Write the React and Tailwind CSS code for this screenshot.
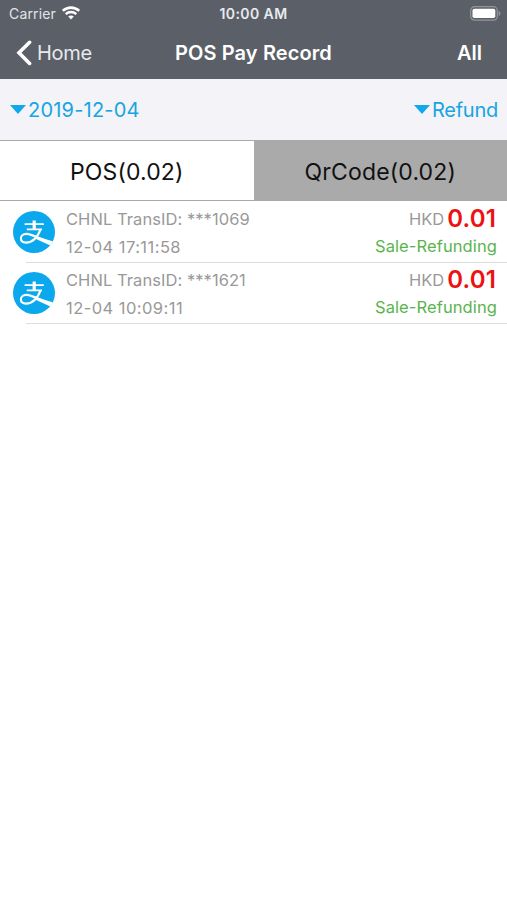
import React, { useState } from 'react';

const records = [
  { id: '***1069', time: '12-04 17:11:58', currency: 'HKD', amount: '0.01', status: 'Sale-Refunding' },
  { id: '***1621', time: '12-04 10:09:11', currency: 'HKD', amount: '0.01', status: 'Sale-Refunding' },
];

const tabs = [
  { key: 'pos', label: 'POS(0.02)' },
  { key: 'qr', label: 'QrCode(0.02)' },
];

const WifiIcon = () => (
  <svg viewBox="0 0 18 14" className="w-[18px] h-[14px] mb-px" fill="none" stroke="#fff">
    <path d="M0.8 4.9C5.4 0.5 12.6 0.5 17.2 4.9" strokeWidth="2.6" />
    <path d="M3.7 8.1C6.7 5.3 11.3 5.3 14.3 8.1" strokeWidth="2.3" />
    <path d="M9 13.4L6.2 10.6C7.8 9.2 10.2 9.2 11.8 10.6Z" fill="#fff" stroke="none" />
  </svg>
);

const BatteryIcon = () => (
  <svg viewBox="0 0 31 15" className="w-[31px] h-[15px]">
    <rect x="0.7" y="0.7" width="26.6" height="13.4" rx="3.8" fill="none" stroke="#92969c" strokeWidth="1.2" />
    <rect x="2.5" y="2.7" width="22.8" height="9.4" rx="1.8" fill="#fff" />
    <path d="M28.6 5v5c1.1-.4 1.9-1.4 1.9-2.5S29.7 5.4 28.6 5z" fill="#92969c" />
  </svg>
);

const Caret = () => (
  <svg viewBox="0 0 16 9" className="w-4 h-[9px] mb-0.5" fill="#10aaea">
    <path d="M0 0H16L8 9Z" />
  </svg>
);

const AlipayIcon = () => (
  <svg viewBox="0 0 42 42" className="w-[42px] h-[42px] shrink-0">
    <defs>
      <clipPath id="badge">
        <circle cx="21" cy="21" r="21" />
      </clipPath>
    </defs>
    <g clipPath="url(#badge)">
      <rect width="42" height="42" fill="#0ba8ee" />
      <g fill="none" stroke="#fff">
        <path d="M11.6 13.2H30.8M13.8 18.4H29" strokeWidth="1.8" />
        <path d="M21.2 9.6V18.4" strokeWidth="3.2" />
        <path
          d="M27.6 18.4C25.4 24 20.5 31.6 13 31.6C9.6 31.6 7.9 29.8 7.9 27.3C7.9 24.9 10 22.9 13.3 22.9C19 22.9 25 27 42 34"
          strokeWidth="2.1"
        />
      </g>
      <path d="M24 25.4L42 31V36.5C36 34 29 31 22.5 27.8Z" fill="#fff" />
    </g>
  </svg>
);

const RecordRow = ({ record }) => (
  <li className="h-[61px] flex pl-[13px]">
    <div className="relative flex items-center pb-0.5">
      <AlipayIcon />
      <span className="absolute bottom-0 left-[13px] right-0 h-px bg-[#dedee0]" />
    </div>
    <div className="flex-1 flex justify-between pl-[11px] pr-[10px] border-b border-[#dedee0] text-[#999]">
      <div className="text-[16.5px] leading-7 pt-[3px]">
        <p className="tracking-[0.06px]">CHNL TransID: {record.id}</p>
        <p className="tracking-[0.45px]">{record.time}</p>
      </div>
      <div className="text-right pt-[3px]">
        <p className="h-[27px] flex items-center justify-end gap-[3px] pr-px">
          <span className="pt-0.5 text-[16.5px]">{record.currency}</span>
          <span className="text-[24px] tracking-[0.15px] font-semibold text-[#ee1111]">{record.amount}</span>
        </p>
        <p className="text-[16.5px] leading-7 tracking-[0.1px] text-[#5ab44e]">{record.status}</p>
      </div>
    </div>
  </li>
);

const App = () => {
  const [activeTab, setActiveTab] = useState('pos');

  return (
    <div className="w-full min-h-screen bg-white font-['Inter',sans-serif]">
      <header className="h-[79px] bg-[#5b6068] text-white">
        <div className="h-[27px] grid grid-cols-[1fr_auto_1fr] items-center px-[6px]">
          <div className="flex items-center gap-1.5 pl-[3px] text-[14px] tracking-[0.15px] text-[#e2e4e8]">
            <span>Carrier</span>
            <WifiIcon />
          </div>
          <span className="text-center text-[14px] tracking-[0.4px] font-semibold text-[#e8eaee]">10:00 AM</span>
          <div className="flex justify-end">
            <BatteryIcon />
          </div>
        </div>
        <div className="h-[52px] grid grid-cols-[1fr_auto_1fr] items-center px-4">
          <button className="flex items-center gap-[5px] text-[20px] tracking-[-0.3px] text-[#e7e9ed]">
            <svg
              viewBox="0 0 16 26"
              className="w-4 h-[26px]"
              fill="none"
              stroke="#fff"
              strokeWidth="3.6"
              strokeLinecap="round"
            >
              <path d="M13.6 2.3L3 12.8L13.6 23.4" />
            </svg>
            Home
          </button>
          <h1 className="text-[20px] tracking-[0.1px] font-semibold">POS Pay Record</h1>
          <button className="pr-[9px] text-right text-[20px] font-semibold">All</button>
        </div>
      </header>

      <div className="h-[61px] flex items-center justify-between pt-px pl-[10px] pr-[9px] bg-[#f3f3f8] text-[20px] text-[#16a5e3]">
        <button className="flex items-center gap-0.5 tracking-[0.2px]">
          <Caret />
          2019-12-04
        </button>
        <button className="flex items-center gap-0.5 tracking-[-0.25px]">
          <Caret />
          Refund
        </button>
      </div>

      <div className="h-[61px] grid grid-cols-2 border-y border-[#aaa]">
        {tabs.map((tab) => (
          <button
            key={tab.key}
            onClick={() => setActiveTab(tab.key)}
            className={`pt-[3px] text-[23px] tracking-[0.15px] text-[#111] ${activeTab === tab.key ? 'bg-white' : 'bg-[#aaa]'}`}
          >
            {tab.label}
          </button>
        ))}
      </div>

      <ul className="pt-px">
        {records.map((record) => (
          <RecordRow key={record.id} record={record} />
        ))}
      </ul>
    </div>
  );
};

export default App;
